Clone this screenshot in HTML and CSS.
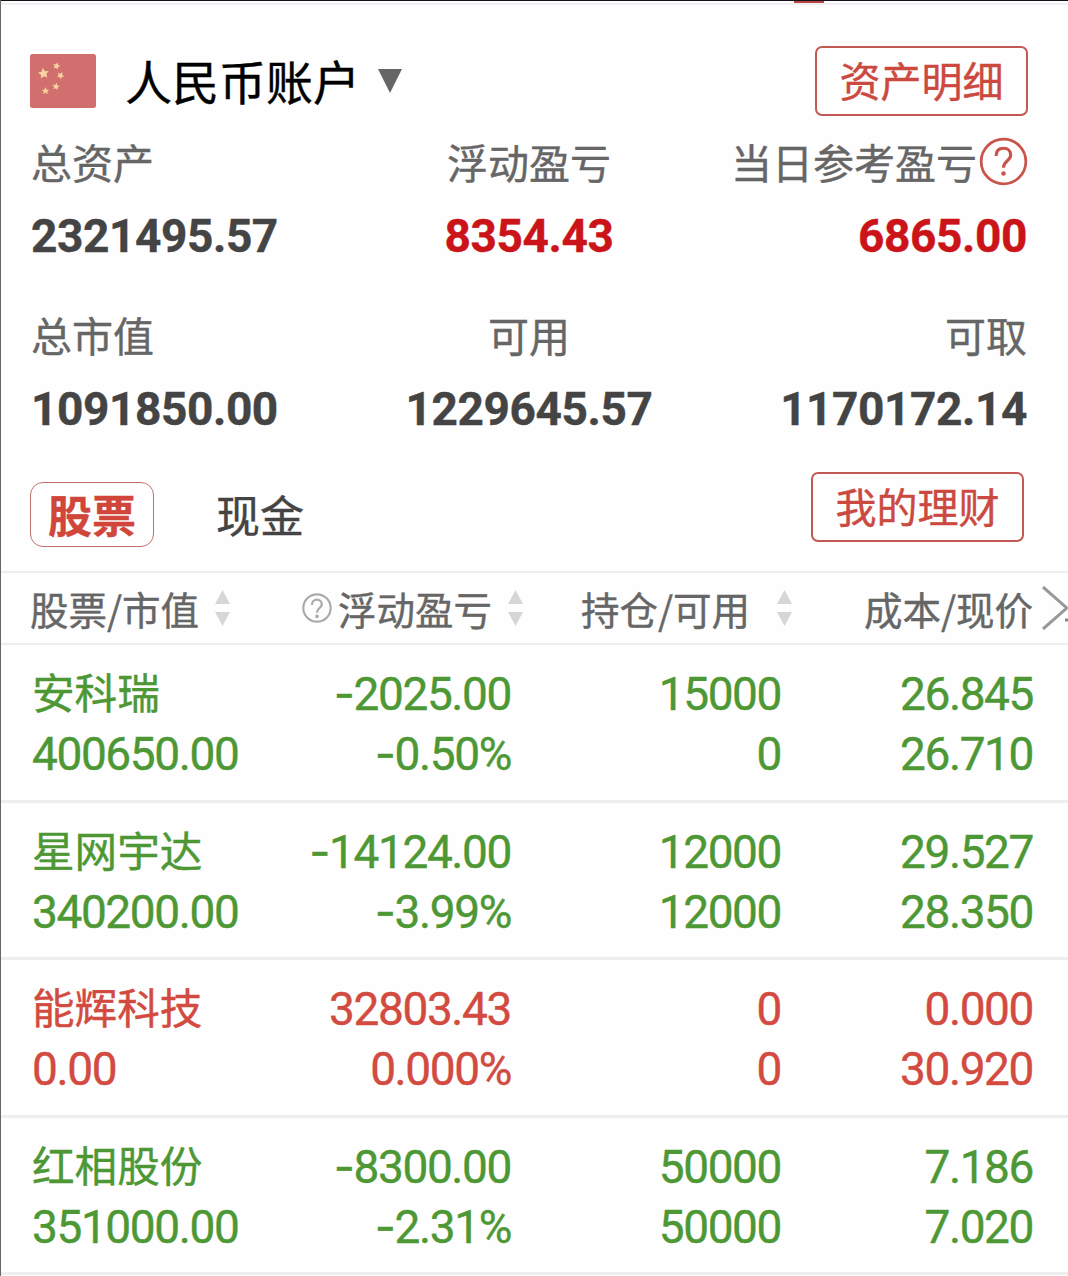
FILE: index.html
```html
<!DOCTYPE html>
<html lang="zh-CN">
<head>
  <meta charset="UTF-8" />
  <meta name="viewport" content="width=device-width, initial-scale=1.0"/>
  <title>人民币账户</title>
  <link rel="stylesheet" href="styles.css">
</head>
<body>
<div class="page">
  <div class="top-line"><span class="top-mark"></span></div>

  <!-- 账户 -->
  <div class="account">
    <svg class="flag" viewBox="0 0 66 54">
      <defs>
        <path id="star" d="M0-5 1.5-1.7 4.8-1.5 2.3 .8 2.9 4 0 2.4-2.9 4-2.3 .8-4.8-1.5-1.5-1.7Z"/>
      </defs>
      <rect width="66" height="54" rx="2.5" fill="#d16e6e"/>
      <g fill="#f6d3a0">
        <use href="#star" transform="translate(13.5 19.5) rotate(-8) scale(1.15)"/>
        <use href="#star" transform="translate(26.5 12) rotate(15) scale(.78)"/>
        <use href="#star" transform="translate(30.5 21.5) rotate(30) scale(.78)"/>
        <use href="#star" transform="translate(26 32.5) rotate(10) scale(.78)"/>
        <use href="#star" transform="translate(15.5 37) scale(.78)"/>
      </g>
    </svg>
    <span class="account-name">人民币账户</span>
    <svg class="caret" viewBox="0 0 24 24"><path d="M0 0H24L12 24Z" fill="#666"/></svg>
    <a class="btn">资产明细</a>
  </div>

  <!-- 资产汇总 -->
  <div class="summary">
    <div class="item">
      <div class="label">总资产</div>
      <div class="value">2321495.57</div>
    </div>
    <div class="item center">
      <div class="label">浮动盈亏</div>
      <div class="value red">8354.43</div>
    </div>
    <div class="item right">
      <div class="label">当日参考盈亏<svg class="help" viewBox="0 0 50 50" fill="none" stroke="#c9544b"><circle cx="25" cy="25" r="22.8" stroke-width="2.8"/><path d="M17.5 19.5C17.5 14 20.5 11.5 25 11.5S32.3 14.5 32.3 18.5C32.3 24 25 24.5 25 31.5" stroke-width="3.2"/><circle cx="25" cy="37.3" r="2.3" fill="#c9544b" stroke="none"/></svg></div>
      <div class="value red">6865.00</div>
    </div>
    <div class="item">
      <div class="label">总市值</div>
      <div class="value">1091850.00</div>
    </div>
    <div class="item center">
      <div class="label">可用</div>
      <div class="value">1229645.57</div>
    </div>
    <div class="item right">
      <div class="label">可取</div>
      <div class="value">1170172.14</div>
    </div>
  </div>

  <div class="tabs">
    <span class="tab active">股票</span>
    <span class="tab">现金</span>
    <a class="btn">我的理财</a>
  </div>

  <!-- 持仓列表 -->
  <div class="thead">
    <div class="th">股票/市值<svg class="sort" viewBox="0 0 15 36"><path d="M7.5 0 15 14H0ZM0 22H15L7.5 36Z"/></svg></div>
    <div class="th"><svg class="help-small" viewBox="0 0 50 50" fill="none" stroke="#aaa"><circle cx="25" cy="25" r="22.8" stroke-width="3.6"/><path d="M16.5 20C16.5 14 20.5 11 25 11S33 14.5 33 19C33 24.5 25 25 25 33" stroke-width="3.8"/><circle cx="25" cy="39" r="3" fill="#aaa" stroke="none"/></svg>浮动盈亏<svg class="sort" viewBox="0 0 15 36"><path d="M7.5 0 15 14H0ZM0 22H15L7.5 36Z"/></svg></div>
    <div class="th">持仓/可用<svg class="sort wide" viewBox="0 0 15 36"><path d="M7.5 0 15 14H0ZM0 22H15L7.5 36Z"/></svg></div>
    <div class="th">成本/现价<svg class="more" viewBox="0 0 26 44"><path d="M1 1 25 22 1 43" fill="none" stroke="#999" stroke-width="3"/><path d="M23 32.5H26V35.5H23Z" fill="#888"/></svg></div>
  </div>

  <div class="row green">
    <div class="name">安科瑞</div>
    <div><i>-</i>2025.00</div>
    <div>15000</div>
    <div>26.845</div>
    <div class="cost">400650.00</div>
    <div><i>-</i>0.50%</div>
    <div>0</div>
    <div>26.710</div>
  </div>
  <div class="row green">
    <div class="name">星网宇达</div>
    <div><i>-</i>14124.00</div>
    <div>12000</div>
    <div>29.527</div>
    <div class="cost">340200.00</div>
    <div><i>-</i>3.99%</div>
    <div>12000</div>
    <div>28.350</div>
  </div>
  <div class="row up">
    <div class="name">能辉科技</div>
    <div>32803.43</div>
    <div>0</div>
    <div>0.000</div>
    <div class="cost">0.00</div>
    <div>0.000%</div>
    <div>0</div>
    <div>30.920</div>
  </div>
  <div class="row green">
    <div class="name">红相股份</div>
    <div><i>-</i>8300.00</div>
    <div>50000</div>
    <div>7.186</div>
    <div class="cost">351000.00</div>
    <div><i>-</i>2.31%</div>
    <div>50000</div>
    <div>7.020</div>
  </div>
</div>
</body>
</html>
```
FILE: styles.css
```css
* {
  box-sizing: border-box;
}
body {
  margin: 0;
  background: #fefefe;
  font-family: "Noto Sans CJK SC", sans-serif;
  color: #666;
  -webkit-text-stroke: 0.4px;
}
.page {
  width: 1068px;
  height: 1276px;
  overflow: hidden;
  border-left: 1px solid #666;
}
.top-line {
  height: 5px;
  border-top: 1px solid #15101a;
  border-bottom: 2px solid #f1eff1;
}
.top-mark {
  display: block;
  width: 30px;
  height: 2px;
  margin-left: 793px;
  background: #b5453f;
}

/* 账户 */
.account {
  display: flex;
  align-items: center;
  height: 70px;
  margin: 41px 40px 0 29px;
}
.flag {
  width: 66px;
  height: 54px;
}
.account-name {
  margin-left: 29px;
  padding-bottom: 2px;
  font-size: 47px;
  line-height: 68px;
  color: #000;
}
.caret {
  width: 24px;
  height: 24px;
  margin-left: 18px;
}
.btn {
  width: 213px;
  height: 70px;
  margin-left: auto;
  border: 2px solid #c25a53;
  border-radius: 7px;
  font-size: 41px;
  line-height: 63px;
  text-align: center;
  color: #cb493f;
}

/* 资产汇总 */
.summary {
  display: grid;
  grid-template-columns: repeat(3, 332px);
  row-gap: 50px;
  margin: 22px 0 0 30px;
}
.label {
  display: flex;
  align-items: center;
  height: 50px;
  padding-bottom: 4px;
  font-size: 41px;
  line-height: 46px;
}
.value {
  margin-top: 23px;
  height: 50px;
  font: bold 46px/50px Roboto, sans-serif;
  letter-spacing: -0.4px;
  color: #444;
}
.center {
  text-align: center;
}
.center .label {
  justify-content: center;
}
.right {
  text-align: right;
}
.right .label {
  justify-content: flex-end;
}
.value.red {
  color: #cb1419;
}
.help {
  width: 49px;
  height: 49px;
  margin: 0 -1px 0 2px;
}

/* 标签 */
.tabs {
  display: flex;
  height: 99px;
  margin: 38px 44px 0 29px;
}
.tab {
  height: 65px;
  margin-top: 10px;
  font-size: 44px;
  line-height: 64px;
  color: #444;
}
.tab.active {
  width: 124px;
  margin-right: 62px;
  border: 1px solid #c0736e;
  border-radius: 13px;
  font-weight: bold;
  line-height: 62px;
  text-align: center;
  color: #d0463b;
}

/* 表头 */
.thead {
  display: grid;
  grid-template-columns: 272px 279px 283px 1fr;
  height: 74px;
  padding-left: 29px;
  border-top: 2px solid #eee;
  border-bottom: 2px solid #eee;
}
.th {
  display: flex;
  align-items: center;
  height: 70px;
  font-size: 38.5px;
  line-height: 66px;
  white-space: nowrap;
}
.sort {
  width: 15px;
  height: 36px;
  margin-left: 16px;
  fill: #d6d6d6;
}
.sort.wide {
  margin-left: 27px;
}
.help-small {
  width: 30px;
  height: 30px;
  margin-right: 6px;
}
.more {
  flex: none;
  width: 26px;
  height: 44px;
  margin-left: 9px;
}

/* 持仓 */
.row {
  display: grid;
  grid-template-columns: 230px 249px 270px 252px;
  grid-template-rows: 60px 60px;
  height: 157.5px;
  padding: 19px 0 0 31px;
  border-bottom: 3px solid #eee;
  font: 46px/60px Roboto, "Noto Sans CJK SC", sans-serif;
  letter-spacing: -1.4px;
  text-align: right;
}
.row i {
  font-family: Inter, sans-serif;
  font-style: normal;
  line-height: 1;
}
.name,
.cost {
  text-align: left;
}
.name {
  font-family: "Noto Sans CJK SC", sans-serif;
  font-size: 42.6px;
  line-height: 54px;
  letter-spacing: 0;
}
.green {
  color: #4d9835;
}
.up {
  color: #d24a40;
}
```
